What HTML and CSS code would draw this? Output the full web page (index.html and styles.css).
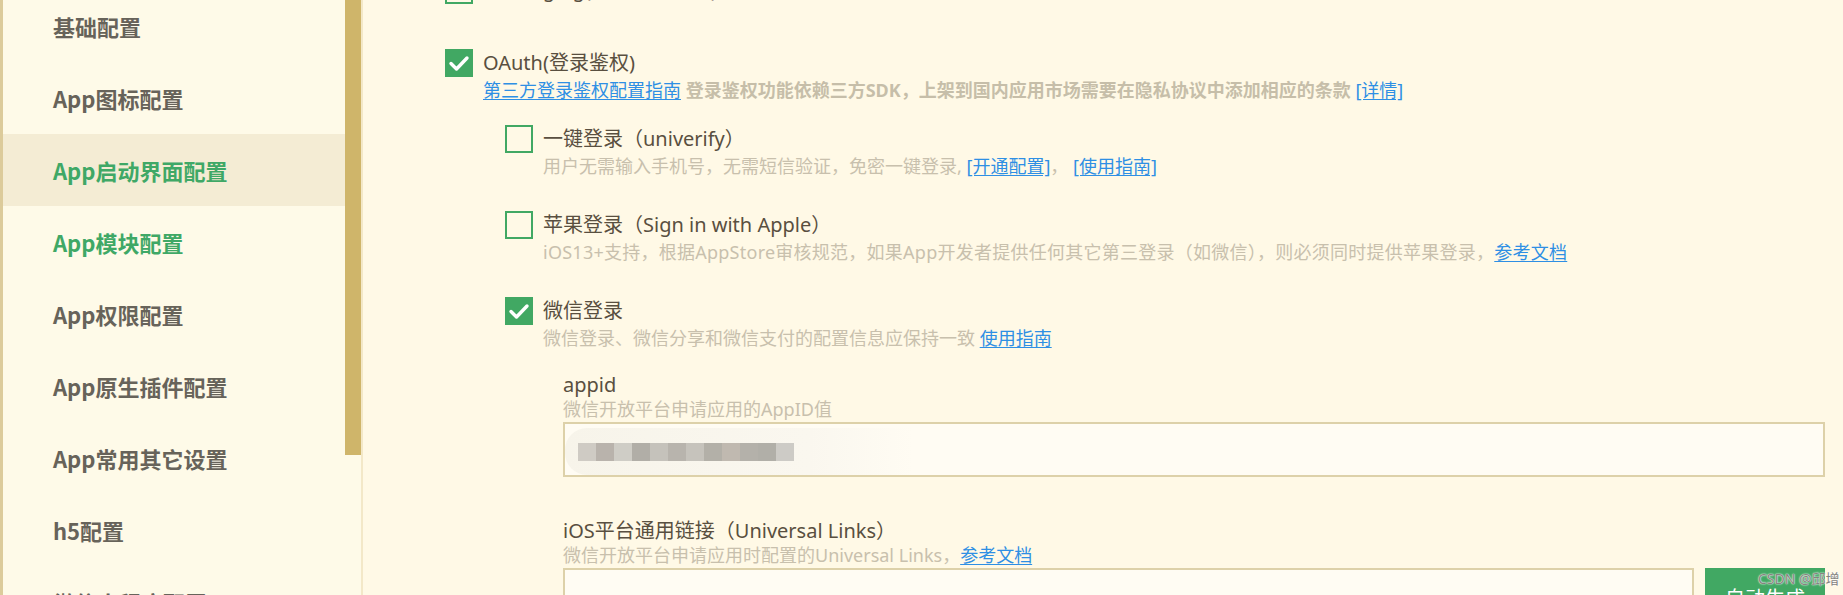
FILE: index.html
```html
<!DOCTYPE html>
<html lang="zh-CN">
<head>
<meta charset="utf-8">
<title>manifest</title>
<link rel="stylesheet" href="styles.css">
</head>
<body>
<div class="app">
  <aside class="sidebar">
    <ul class="nav">
      <li class="nav-item">基础配置</li>
      <li class="nav-item">App图标配置</li>
      <li class="nav-item active">App启动界面配置</li>
      <li class="nav-item green">App模块配置</li>
      <li class="nav-item">App权限配置</li>
      <li class="nav-item">App原生插件配置</li>
      <li class="nav-item">App常用其它设置</li>
      <li class="nav-item">h5配置</li>
      <li class="nav-item">微信小程序配置</li>
    </ul>
    <div class="scrollbar"><div class="thumb"></div></div>
  </aside>
  <main class="content">
    <div class="modules">
      <div class="module">
        <div class="row"><span class="cb"></span><span class="title">Messaging(短彩邮件消息)</span></div>
      </div>
      <div class="module oauth">
        <div class="row"><span class="cb checked"><svg viewBox="0 0 28 28" width="28" height="28"><path d="M6 14.5 L11.5 20 L22 9" fill="none" stroke="#fff" stroke-width="3.4" stroke-linecap="round" stroke-linejoin="round"/></svg></span><span class="title">OAuth(登录鉴权)</span></div>
        <p class="desc"><a class="link">第三方登录鉴权配置指南</a> <b class="note">登录鉴权功能依赖三方SDK，上架到国内应用市场需要在隐私协议中添加相应的条款</b> <a class="link">[详情]</a></p>
        <div class="subs">
          <div class="sub">
            <div class="row"><span class="cb"></span><span class="title">一键登录（univerify）</span></div>
            <p class="desc">用户无需输入手机号，无需短信验证，免密一键登录, <a class="link">[开通配置]</a>， <a class="link">[使用指南]</a></p>
          </div>
          <div class="sub">
            <div class="row"><span class="cb"></span><span class="title">苹果登录（Sign in with Apple）</span></div>
            <p class="desc wide">iOS13+支持，根据AppStore审核规范，如果App开发者提供任何其它第三登录（如微信），则必须同时提供苹果登录，<a class="link">参考文档</a></p>
          </div>
          <div class="sub">
            <div class="row"><span class="cb checked"><svg viewBox="0 0 28 28" width="28" height="28"><path d="M6 14.5 L11.5 20 L22 9" fill="none" stroke="#fff" stroke-width="3.4" stroke-linecap="round" stroke-linejoin="round"/></svg></span><span class="title">微信登录</span></div>
            <p class="desc">微信登录、微信分享和微信支付的配置信息应保持一致 <a class="link">使用指南</a></p>
            <div class="fields">
              <div class="field">
                <div class="label">appid</div>
                <div class="hint">微信开放平台申请应用的AppID值</div>
                <div class="input">
                  <span class="blur">
                    <span class="px" style="background:#cfcbc4"></span><span class="px" style="background:#b9b3ac"></span><span class="px" style="background:#cfcdc6"></span><span class="px" style="background:#b1aea7"></span><span class="px" style="background:#c5c2bb"></span><span class="px" style="background:#b8b4ad"></span><span class="px" style="background:#c6c3bc"></span><span class="px" style="background:#b3b0a8"></span><span class="px" style="background:#c0b9b0"></span><span class="px" style="background:#b4b1aa"></span><span class="px" style="background:#b1afa8"></span><span class="px" style="background:#cdcbc6"></span>
                  </span>
                </div>
              </div>
              <div class="field second">
                <div class="label">iOS平台通用链接（Universal Links）</div>
                <div class="hint">微信开放平台申请应用时配置的Universal Links，<a class="link">参考文档</a></div>
                <div class="input-row">
                  <div class="input"></div>
                  <button class="btn">自动生成</button>
                </div>
              </div>
            </div>
          </div>
        </div>
      </div>
    </div>
  </main>
</div>
<div class="watermark">CSDN @邱增</div>
</body>
</html>
```

FILE: styles.css
```css
* { box-sizing: border-box; }
html, body { margin: 0; padding: 0; }
body {
  width: 1843px;
  height: 595px;
  overflow: hidden;
  background: #fff9e6;
  font-family: "Noto Sans", "Noto Sans CJK SC", sans-serif;
  color: #594f40;
}
.app {
  display: flex;
  height: 595px;
  overflow: hidden;
}
.sidebar {
  width: 363px;
  flex: none;
  display: flex;
  background: #fefae8;
  border-left: 3px solid #dccb9b;
  border-right: 2px solid #f3e8c8;
  overflow: hidden;
}
.nav {
  list-style: none;
  margin: -10px 0 0 0;
  padding: 0;
  flex: 1;
}
.nav-item {
  height: 72px;
  display: flex;
  align-items: center;
  padding-left: 50px;
  font-size: 22px;
  font-weight: 700;
  color: #67635a;
  font-family: "Noto Sans CJK SC", sans-serif;
}
.nav-item.active {
  background: #f4ecd4;
  color: #3fa866;
}
.nav-item.green { color: #3fa866; }
.scrollbar {
  width: 16px;
  flex: none;
}
.thumb {
  height: 455px;
  background: #cfb56a;
}
.content {
  flex: 1;
  padding: 0 18px 0 82px;
  overflow: hidden;
}
.modules { margin-top: -24px; }
.module + .module { margin-top: 45px; }
.row {
  display: flex;
  align-items: center;
  gap: 10px;
  height: 28px;
}
.cb {
  width: 28px;
  height: 28px;
  flex: none;
  border: 2.5px solid #41a863;
  display: block;
}
.cb.checked {
  background: #41a863;
  border: none;
}
.cb svg { display: block; }
.title {
  font-size: 20px;
  line-height: 28px;
  color: #594f40;
}
.desc {
  margin: 0 0 0 38px;
  font-size: 18px;
  line-height: 26px;
  color: #c8c0ad;
  white-space: nowrap;
}
.desc.wide { letter-spacing: 0.25px; }
.note {
  font-weight: 700;
  color: #c6bea9;
}
.link {
  color: #2e8fe4;
  text-decoration: underline;
  text-underline-offset: 2px;
  cursor: pointer;
}
.subs {
  margin: 22px 0 0 60px;
}
.sub + .sub { margin-top: 32px; }
.fields {
  margin: 21px 0 0 58px;
}
.field.second { margin-top: 41px; }
.label {
  font-size: 20px;
  line-height: 26px;
  color: #594f40;
}
.hint {
  font-size: 18px;
  line-height: 23px;
  color: #c8c0ad;
  margin-bottom: 1px;
  white-space: nowrap;
}
.input {
  height: 55px;
  border: 2px solid #ddd1a9;
  background: #fffcf3;
  display: flex;
  align-items: center;
  padding-left: 0;
}
.blur {
  display: flex;
  align-items: center;
  height: 47px;
  margin-top: 4px;
  padding: 0 120px 0 13px;
  background: linear-gradient(90deg, #f7f4ea 0%, #faf7ef 70%, rgba(255,252,243,0) 100%);
  border-radius: 22px 0 0 22px;
}
.px {
  width: 18px;
  height: 18px;
  display: block;
}
.input-row {
  display: flex;
  gap: 11px;
}
.input-row .input { flex: 1; }
.btn {
  width: 120px;
  height: 58px;
  flex: none;
  border: none;
  background: #41a863;
  color: #fff;
  font-family: "Noto Sans CJK SC", sans-serif;
  font-size: 20px;
  padding: 0;
}
.watermark {
  position: absolute;
  left: 1758px;
  top: 570px;
  font-family: "Noto Sans", "Noto Sans CJK SC", sans-serif;
  font-size: 14px;
  line-height: 18px;
  color: #85847f;
  text-shadow: 0 0 2px #fff, 0 0 1px #fff;
  white-space: nowrap;
}
```
